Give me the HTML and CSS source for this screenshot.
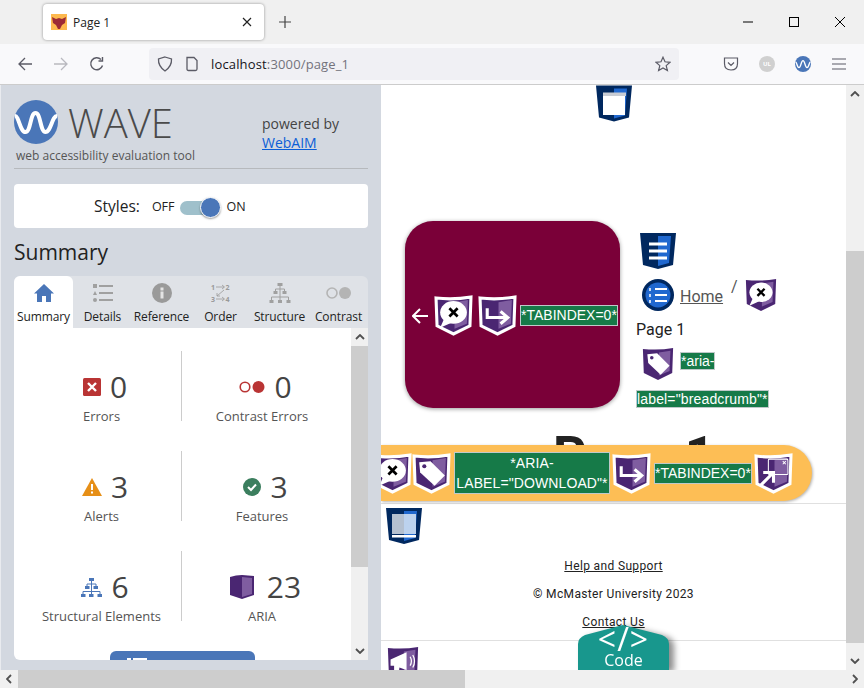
FILE: index.html
```html
<!DOCTYPE html>
<html lang="en">
<head>
  <meta charset="UTF-8">
  <title>Page 1</title>
  <link rel="stylesheet" href="styles.css">
</head>
<body>

<!-- shared icon shapes -->
<svg class="defs" aria-hidden="true">
  <symbol id="aria-base" viewBox="0 0 36 36" overflow="visible">
    <path d="M1 1 Q18 3 35 0 L34 28 L18 36 L2 28 Z" fill="#4a2672"/>
    <path d="M19 5 L32 3 L31 26 L19 31 Z" fill="#7f5da0"/>
  </symbol>
  <symbol id="aria-border" viewBox="0 0 36 36" overflow="visible">
    <path d="M1 1 Q18 3 35 0 L34 28 L18 36 L2 28 Z" fill="#4a2672" stroke="#fff" stroke-width="3"/>
    <path d="M19 5 L32 3 L31 26 L19 31 Z" fill="#7f5da0"/>
  </symbol>
  <symbol id="g-x" viewBox="0 0 36 36" overflow="visible">
    <ellipse cx="18" cy="15" rx="13" ry="11" fill="#fff"/>
    <path d="M9 21 L5 30 L16 25 Z" fill="#fff"/>
    <path d="M14 11 L22 19 M22 11 L14 19" stroke="#000" stroke-width="2.600"/>
  </symbol>
  <symbol id="g-tag" viewBox="0 0 36 36" overflow="visible">
    <path d="M6 7 L17 6 L31 20 L21 30 L7 17 Z" fill="#fff"/>
    <circle cx="11" cy="11" r="2" fill="#4a2672"/>
  </symbol>
  <symbol id="g-arrow" viewBox="0 0 36 36" overflow="visible">
    <path d="M8 11 V20 H26 M21 14 L28 20 L21 26" fill="none" stroke="#fff" stroke-width="3"/>
  </symbol>
  <symbol id="g-zoom" viewBox="0 0 36 36" overflow="visible">
    <rect x="13" y="4" width="19" height="15" rx="1" fill="none" stroke="#fff" stroke-width="1"/>
    <path d="M27 6 L30 9 M30 6 L27 9" stroke="#fff"/>
    <path d="M5 30 L17 18 M8 17 H18 V27" fill="none" stroke="#fff" stroke-width="3"/>
  </symbol>
  <symbol id="g-speaker" viewBox="0 0 36 36" overflow="visible">
    <path d="M4 14 L22 6 V26 L14 23 L13 31 H8 L8 21 H4 Z" fill="#fff"/>
    <path d="M26 11 Q29 16 26 21 M29 9 Q33 16 29 23" fill="none" stroke="#fff" stroke-width="1.400"/>
  </symbol>
  <symbol id="html-shield" viewBox="0 0 36 36" overflow="visible">
    <path d="M0 0 H36 L33 32 L18 36 L3 32 Z" fill="#00285f"/>
    <path d="M18 3 H31 L29 30 L18 33 Z" fill="#2068cf"/>
  </symbol>
</svg>

<div class="window">

  <header class="tabbar">
    <div class="tab">
      <svg class="favicon" viewBox="0 0 16 16">
        <rect width="16" height="16" fill="#fdb94e"/>
        <path d="M1 3 L5 5 L8 4 L11 5 L15 3 L14 9 L11 11 L9 15 H7 L5 11 L2 9 Z" fill="#9c2a35"/>
      </svg>
      <span class="tab-title">Page 1</span>
      <svg class="tab-close" viewBox="0 0 10 10"><path d="M1 1 L9 9 M9 1 L1 9" stroke="#222" stroke-width="1.200"/></svg>
    </div>
    <svg class="new-tab" viewBox="0 0 12 12"><path d="M6 0 V12 M0 6 H12" stroke="#444" stroke-width="1.200"/></svg>
    <div class="win-controls">
      <svg viewBox="0 0 12 12"><path d="M1 6 H11" stroke="#000"/></svg>
      <svg viewBox="0 0 12 12"><rect x="1.500" y="1.500" width="9" height="9" fill="none" stroke="#000"/></svg>
      <svg viewBox="0 0 12 12"><path d="M1 1 L11 11 M11 1 L1 11" stroke="#000"/></svg>
    </div>
  </header>

  <nav class="toolbar">
    <svg class="tb-icon" viewBox="0 0 16 16"><path d="M15 8 H2 M8 2 L2 8 L8 14" fill="none" stroke="#5b5b66" stroke-width="1.300"/></svg>
    <svg class="tb-icon" viewBox="0 0 16 16"><path d="M1 8 H14 M8 2 L14 8 L8 14" fill="none" stroke="#b9b9bf" stroke-width="1.300"/></svg>
    <svg class="tb-icon" viewBox="0 0 16 16"><path d="M13.500 9.500 A6 6 0 1 1 12 3.500 M13.500 1 V5 H9.500" fill="none" stroke="#5b5b66" stroke-width="1.400"/></svg>
    <div class="urlbar">
      <svg class="url-icon" viewBox="0 0 16 16"><path d="M8 1 L14.500 3 Q15 10 8 15 Q1 10 1.500 3 Z" fill="none" stroke="#5b5b66" stroke-width="1.300"/></svg>
      <svg class="url-icon" viewBox="0 0 16 16"><path d="M3 1.500 H10 L13 4.500 V13 Q13 14.500 11.500 14.500 H4.500 Q3 14.500 3 13 Z" fill="none" stroke="#5b5b66" stroke-width="1.300"/></svg>
      <span class="url-text"><span class="url-host">localhost</span>:3000/page_1</span>
      <svg class="url-star" viewBox="0 0 16 16"><path d="M8 1.200 L10 5.800 L15 6.300 L11.200 9.600 L12.400 14.600 L8 12 L3.600 14.600 L4.800 9.600 L1 6.300 L6 5.800 Z" fill="none" stroke="#5b5b66" stroke-width="1.200"/></svg>
    </div>
    <div class="tb-right">
      <svg class="tb-icon" viewBox="0 0 16 16"><path d="M1.500 2 H14.500 V7.500 Q14.500 14 8 14 Q1.500 14 1.500 7.500 Z M5 6.500 L8 9.500 L11 6.500" fill="none" stroke="#5b5b66" stroke-width="1.200"/></svg>
      <svg class="tb-icon" viewBox="0 0 16 16"><circle cx="8" cy="8" r="8" fill="#d0d0d0"/><text x="8" y="10" class="ul-text">UL</text></svg>
      <svg class="tb-icon" viewBox="0 0 16 16"><circle cx="8" cy="8" r="8" fill="#4a76b8"/><path d="M0.500 6 C2 6 2 11.600 4 11.600 C6 11.600 6 4.600 8 4.600 C10 4.600 10 11.600 12 11.600 C14 11.600 14 6 15.500 6" fill="none" stroke="#fff" stroke-width="1.400"/></svg>
      <svg class="tb-icon" viewBox="0 0 16 16"><path d="M1 3 H15 M1 8 H15 M1 13 H15" stroke="#5b5b66" stroke-width="1.200"/></svg>
    </div>
  </nav>

  <div class="viewport">

    <aside class="wave">
      <div class="wave-head">
        <div class="wave-brand">
          <div class="wave-logo">
            <svg class="wave-mark" viewBox="0 0 44 44">
              <circle cx="22" cy="22" r="22" fill="#4a76b8"/>
              <path d="M1 16 C5 16 6 32 11.500 32 C17 32 16 13 21.500 13 C27 13 26 32 31.500 32 C37 32 38 16 43 16" fill="none" stroke="#fff" stroke-width="4"/>
            </svg>
            <span class="wave-name">WAVE</span>
          </div>
          <div class="wave-sub">web accessibility evaluation tool</div>
        </div>
        <div class="wave-powered">powered by<br><a href="#">WebAIM</a></div>
      </div>

      <div class="styles-card">
        <span class="styles-label">Styles:</span>
        <span class="styles-opt">OFF</span>
        <span class="toggle"><span class="toggle-knob"></span></span>
        <span class="styles-opt">ON</span>
      </div>

      <h2 class="wave-title">Summary</h2>

      <div class="tabs">
        <div class="wtab active">
          <svg viewBox="0 0 20 20"><path d="M10 1 L20 10.500 H17 V19 H12 V13 H8 V19 H3 V10.500 H0 Z" fill="#4a76b8"/></svg>
          Summary
        </div>
        <div class="wtab">
          <svg viewBox="0 0 20 20"><path d="M6 3 H20 M6 10 H20 M6 17 H20" stroke="#a0a0a0" stroke-width="2"/><rect y="1" width="4" height="4" fill="#a0a0a0"/><path d="M2 8 L4 12 H0 Z" fill="#a0a0a0"/><circle cx="2" cy="17" r="2" fill="#a0a0a0"/></svg>
          Details
        </div>
        <div class="wtab">
          <svg viewBox="0 0 20 20"><circle cx="10" cy="10" r="10" fill="#9a9a9a"/><rect x="8.500" y="8.500" width="3" height="7" fill="#e4e4e4"/><rect x="8.500" y="4.500" width="3" height="3" fill="#e4e4e4"/></svg>
          Reference
        </div>
        <div class="wtab">
          <svg viewBox="0 0 20 20"><text x="0" y="7" class="order-text">1</text><text x="14.500" y="7" class="order-text">2</text><text x="0" y="19" class="order-text">3</text><text x="14.500" y="19" class="order-text">4</text><path d="M5 4 H13 M11 2 L13.500 4 L11 6 M5 16 H13 M11 14 L13.500 16 L11 18 M13 7 L6 13 M6 10 V13 H9" fill="none" stroke="#999" stroke-width=".8"/></svg>
          Order
        </div>
        <div class="wtab">
          <svg class="wide" viewBox="0 0 21 20"><g fill="#a0a0a0"><rect x="8" y="0" width="5" height="3"/><rect x="4" y="8" width="4" height="3"/><rect x="13" y="8" width="4" height="3"/><rect x="0" y="17" width="4" height="3"/><rect x="8.500" y="17" width="4" height="3"/><rect x="17" y="17" width="4" height="3"/></g><path d="M10.500 3 V17 M6 8 V6 H15 V8 M2 17 V14 H19 V17" fill="none" stroke="#a0a0a0"/></svg>
          Structure
        </div>
        <div class="wtab">
          <svg class="wide" viewBox="0 0 26 20"><circle cx="6" cy="10" r="5" fill="none" stroke="#b4b4b4" stroke-width="1.600"/><circle cx="19" cy="10" r="6" fill="#b4b4b4"/></svg>
          Contrast
        </div>
      </div>

      <div class="tab-panel">
        <div class="stats">
          <div class="stat">
            <div class="stat-num">
              <svg class="stat-icon" viewBox="0 0 18 18"><rect width="18" height="18" rx="1.500" fill="#b93434"/><path d="M5 5 L13 13 M13 5 L5 13" stroke="#fff" stroke-width="2.400"/></svg>
              0
            </div>
            <div class="stat-label">Errors</div>
          </div>
          <div class="stat">
            <div class="stat-num">
              <svg class="stat-icon contrast" viewBox="0 0 26 12"><circle cx="6" cy="6" r="4.800" fill="none" stroke="#b93434" stroke-width="1.600"/><circle cx="19.500" cy="6" r="6" fill="#b93434"/></svg>
              0
            </div>
            <div class="stat-label">Contrast Errors</div>
          </div>
          <div class="stat">
            <div class="stat-num">
              <svg class="stat-icon alert" viewBox="0 0 20 18"><path d="M10 0 L20 18 H0 Z" fill="#e68f17"/><rect x="9" y="6" width="2" height="6" fill="#fff"/><rect x="9" y="13.500" width="2" height="2" fill="#fff"/></svg>
              3
            </div>
            <div class="stat-label">Alerts</div>
          </div>
          <div class="stat">
            <div class="stat-num">
              <svg class="stat-icon" viewBox="0 0 18 18"><circle cx="9" cy="9" r="9" fill="#3b7e5e"/><path d="M5 9 L8 12 L13 6.500" fill="none" stroke="#fff" stroke-width="2"/></svg>
              3
            </div>
            <div class="stat-label">Features</div>
          </div>
          <div class="stat">
            <div class="stat-num">
              <svg class="stat-icon tree" viewBox="0 0 21 19"><g fill="#4a76b8"><rect x="8" y="0" width="5" height="3"/><rect x="4" y="8" width="4.500" height="3"/><rect x="12.500" y="8" width="4.500" height="3"/><rect x="0" y="16" width="4.500" height="3"/><rect x="8" y="16" width="4.500" height="3"/><rect x="16.500" y="16" width="4.500" height="3"/></g><path d="M10.500 3 V16 M6 8 V6 H15 V8 M2 16 V13.500 H19 V16" fill="none" stroke="#4a76b8"/></svg>
              6
            </div>
            <div class="stat-label">Structural Elements</div>
          </div>
          <div class="stat">
            <div class="stat-num aria">
              <svg class="stat-icon box" viewBox="0 0 24 24"><path d="M0 2 Q6 0 12 0 L24 1 V20 L12 24 L0 20 Z" fill="#4a2672"/><path d="M12 2 L22 3 V19 L12 22 Z" fill="#7f5da0"/></svg>
              23
            </div>
            <div class="stat-label">ARIA</div>
          </div>
        </div>
        <div class="panel-btn">
          <svg viewBox="0 0 20 10"><path d="M0 1 H4 M6 1 H20" stroke="#fff" stroke-width="2"/></svg>
        </div>
        <div class="vscroll inner">
          <svg class="sb-arrow" viewBox="0 0 10 6"><path d="M1 5 L5 1 L9 5" fill="none" stroke="#505050" stroke-width="1.800"/></svg>
          <div class="sb-thumb panel-thumb"></div>
          <div class="sb-fill"></div>
          <svg class="sb-arrow" viewBox="0 0 10 6"><path d="M1 1 L5 5 L9 1" fill="none" stroke="#505050" stroke-width="1.800"/></svg>
        </div>
      </div>
    </aside>

    <main class="page">
      <div class="page-scroll">
        <svg class="top-shield" viewBox="0 0 36 36">
          <use href="#html-shield"/>
          <rect x="7" y="7" width="23" height="3.500" fill="#c8ccd4"/>
          <rect x="7" y="10.500" width="22" height="19" fill="#fff"/>
        </svg>

        <div class="hero">
          <div class="hero-card">
            <svg class="hero-arrow" viewBox="0 0 16 16"><path d="M16 8 H1 M8 1 L1 8 L8 15" fill="none" stroke="#fff" stroke-width="2"/></svg>
            <svg class="aria-icon bordered" viewBox="0 0 36 36"><use href="#aria-border"/><use href="#g-x"/></svg>
            <svg class="aria-icon bordered" viewBox="0 0 36 36"><use href="#aria-border"/><use href="#g-arrow"/></svg>
            <span class="wave-label">*TABINDEX=0*</span>
          </div>
          <div class="crumbs">
            <svg class="crumb-shield" viewBox="0 0 36 36">
              <use href="#html-shield"/>
              <path d="M9 11 H27 M9 18 H27 M9 25 H27" stroke="#fff" stroke-width="3"/>
            </svg>
            <div class="crumb-row">
              <svg class="round-icon" viewBox="0 0 32 32">
                <circle cx="16" cy="16" r="16" fill="#00285f"/>
                <circle cx="16" cy="16" r="12.500" fill="#2068cf"/>
                <path d="M13 10 H25 M13 16 H25 M13 22 H25" stroke="#fff" stroke-width="2"/>
                <path d="M8 9 V12 M8 15 V18 M8 21 V24" stroke="#fff" stroke-width="1.500"/>
              </svg>
              <a class="crumb-link" href="#">Home</a>
              <span class="crumb-sep">/</span>
              <svg class="crumb-aria" viewBox="0 0 36 36"><use href="#aria-base"/><use href="#g-x"/></svg>
            </div>
            <div class="crumb-current">Page 1</div>
            <div class="crumb-row tag-row">
              <svg class="crumb-aria" viewBox="0 0 36 36"><use href="#aria-base"/><use href="#g-tag"/></svg>
              <span class="wave-label">*aria-</span>
            </div>
            <span class="wave-label crumb-last">label="breadcrumb"*</span>
          </div>
        </div>

        <h1 class="page-heading">Page 1</h1>

        <div class="download-bar">
          <svg class="aria-icon bordered first" viewBox="0 0 36 36"><use href="#aria-border"/><use href="#g-x"/></svg>
          <svg class="aria-icon bordered" viewBox="0 0 36 36"><use href="#aria-border"/><use href="#g-tag"/></svg>
          <span class="wave-label download-label">*ARIA-LABEL="DOWNLOAD"*</span>
          <svg class="aria-icon bordered" viewBox="0 0 36 36"><use href="#aria-border"/><use href="#g-arrow"/></svg>
          <span class="wave-label">*TABINDEX=0*</span>
          <svg class="aria-icon bordered" viewBox="0 0 36 36"><use href="#aria-border"/><use href="#g-zoom"/></svg>
        </div>

        <footer class="page-footer">
          <svg class="footer-shield" viewBox="0 0 36 36">
            <use href="#html-shield"/>
            <rect x="6" y="6" width="12" height="20" fill="#b4c0d0"/>
            <rect x="18" y="6" width="12" height="20" fill="#bcd2ee"/>
            <rect x="6" y="27" width="24" height="2.500" fill="#fff"/>
          </svg>
          <a class="footer-line" href="#">Help and Support</a>
          <p class="footer-line">© McMaster University 2023</p>
          <a class="footer-line" href="#">Contact Us</a>
        </footer>

        <div class="bottom-strip">
          <svg class="speaker" viewBox="0 0 36 36"><use href="#aria-base"/><use href="#g-speaker"/></svg>
        </div>

        <div class="code-tab">
          <div class="code-shape">
            <span class="code-mark">&lt;/&gt;</span>
            <span class="code-word">Code</span>
          </div>
        </div>
      </div>

      <div class="vscroll outer">
        <svg class="sb-arrow" viewBox="0 0 10 6"><path d="M1 5 L5 1 L9 5" fill="none" stroke="#505050" stroke-width="1.800"/></svg>
        <div class="sb-fill page-track"></div>
        <div class="sb-thumb page-thumb"></div>
        <div class="sb-fill"></div>
        <svg class="sb-arrow" viewBox="0 0 10 6"><path d="M1 1 L5 5 L9 1" fill="none" stroke="#505050" stroke-width="1.800"/></svg>
      </div>
    </main>
  </div>

  <div class="hscroll">
    <svg class="sb-arrow" viewBox="0 0 6 10"><path d="M5 1 L1 5 L5 9" fill="none" stroke="#505050" stroke-width="1.800"/></svg>
    <div class="h-thumb"></div>
    <div class="sb-fill"></div>
    <svg class="sb-arrow" viewBox="0 0 6 10"><path d="M1 1 L5 5 L1 9" fill="none" stroke="#505050" stroke-width="1.800"/></svg>
  </div>

</div>

</body>
</html>
```

FILE: styles.css
```css
* {
  box-sizing: border-box;
}
body {
  margin: 0;
  overflow: hidden;
  font-family: "Open Sans", sans-serif;
  color: #222;
  background: #fff;
}
a {
  color: inherit;
}
.defs {
  display: none;
}
.window {
  width: 864px;
  height: 688px;
  display: flex;
  flex-direction: column;
  overflow: hidden;
}

/* browser chrome */
.tabbar {
  height: 44px;
  background: #f0f0f0;
  display: flex;
  align-items: flex-start;
  padding: 4px 0 0 43px;
}
.tab {
  width: 221px;
  height: 36px;
  background: #fff;
  border-radius: 4px;
  box-shadow: 0 0 3px rgba(0,0,0,0.4);
  display: flex;
  align-items: center;
  padding: 0 12px 0 8px;
}
.favicon {
  width: 16px;
  height: 16px;
}
.tab-title {
  margin-left: 6px;
  font-size: 12px;
  flex: 1;
}
.tab-close {
  width: 10px;
  height: 10px;
}
.new-tab {
  width: 12px;
  height: 12px;
  margin: 12px 0 0 15px;
}
.win-controls {
  margin-left: auto;
  display: flex;
  gap: 34px;
  padding: 12px 18px 0 0;
}
.win-controls svg {
  width: 12px;
  height: 12px;
}
.toolbar {
  height: 41px;
  background: #f9f9fb;
  border-bottom: 1px solid #ccc;
  display: flex;
  align-items: center;
  padding: 0 17px;
  gap: 20px;
}
.tb-icon {
  width: 16px;
  height: 16px;
}
.urlbar {
  width: 530px;
  height: 32px;
  margin-left: 24px;
  background: #f0f0f4;
  border-radius: 4px;
  display: flex;
  align-items: center;
  padding: 0 8px;
  gap: 11px;
}
.url-icon {
  width: 16px;
  height: 16px;
}
.url-text {
  flex: 1;
  font-size: 13px;
  letter-spacing: 0.15px;
  color: #73737c;
}
.url-host {
  color: #15141a;
}
.url-star {
  width: 16px;
  height: 16px;
}
.tb-right {
  margin-left: 24px;
  display: flex;
  gap: 20px;
}
.ul-text {
  font-size: 6px;
  font-weight: 700;
  fill: #fff;
  text-anchor: middle;
}

.viewport {
  flex: 1;
  min-height: 0;
  display: flex;
}

/* WAVE sidebar */
.wave {
  width: 381px;
  flex: none;
  background: #d3d8e0;
  border-left: 1px solid #e9ebef;
  padding: 15px 13px 0 13px;
  display: flex;
  flex-direction: column;
}
.wave-head {
  display: flex;
  height: 69px;
  border-bottom: 1px solid #b6b9bd;
}
.wave-brand {
  width: 248px;
}
.wave-logo {
  display: flex;
  align-items: center;
  gap: 10px;
  height: 44px;
}
.wave-mark {
  width: 44px;
  height: 44px;
}
.wave-name {
  font-size: 40px;
  font-weight: 300;
  color: #4a4a4a;
}
.wave-sub {
  font-size: 12px;
  color: #555;
  margin: 3px 0 0 2px;
}
.wave-powered {
  font-size: 14px;
  line-height: 19px;
  color: #444;
  padding-top: 14px;
}
.wave-powered a {
  color: #0b5ed7;
}
.styles-card {
  height: 44px;
  margin-top: 15px;
  background: #fff;
  border-radius: 4px;
  display: flex;
  align-items: center;
  padding-left: 80px;
}
.styles-label {
  font-size: 15.500px;
  margin-right: 12px;
}
.styles-opt {
  font-size: 12.500px;
}
.toggle {
  width: 38px;
  height: 14px;
  margin: 3px 9px 0 5px;
  background: #9fc0cb;
  border-radius: 7px;
  position: relative;
}
.toggle-knob {
  position: absolute;
  right: -3px;
  top: -4px;
  width: 21px;
  height: 21px;
  background: #4a76b8;
  border: 1px solid #fff;
  border-radius: 50%;
  box-shadow: 0 1px 2px rgba(0,0,0,0.4);
}
.wave-title {
  margin: 9px 0;
  font-size: 21px;
  line-height: 30px;
  font-weight: 400;
}
.tabs {
  height: 52px;
  background: #dfe2e7;
  border-radius: 6px 6px 0 0;
  display: grid;
  grid-template-columns: 59px 59px 59px 59px 59px 59px;
}
.wtab {
  padding-top: 7px;
  font-size: 12px;
  line-height: 16px;
  letter-spacing: -0.1px;
  text-align: center;
  white-space: nowrap;
}
.wtab svg {
  display: block;
  width: 20px;
  height: 20px;
  margin: 0 auto 6px;
}
.wtab svg.wide {
  width: 26px;
}
.wtab.active {
  background: #fff;
  border-radius: 6px 6px 0 0;
}
.order-text {
  font-size: 7px;
  font-weight: 700;
  fill: #999;
}
.tab-panel {
  flex: none;
  height: 332px;
  background: #fff;
  border-radius: 0 0 0 6px;
  position: relative;
  overflow: hidden;
  padding: 23px 25px 0 8px;
}
.stats {
  display: grid;
  grid-template-columns: 160px 160px;
  grid-auto-rows: 70px;
  row-gap: 30px;
}
.stat {
  height: 70px;
  text-align: center;
}
.stat:nth-child(odd) {
  border-right: 1px solid #ccc;
}
.stat-num {
  height: 44px;
  padding: 28px 0 0 7px;
  display: flex;
  justify-content: center;
  align-items: center;
  gap: 9px;
  font-size: 30px;
  line-height: 44px;
  color: #444;
}
.stat-num.aria {
  gap: 13px;
}
.stat-icon {
  width: 18px;
  height: 18px;
}
.stat-icon.contrast {
  width: 26px;
  height: 12px;
}
.stat-icon.alert {
  width: 20px;
}
.stat-icon.tree {
  width: 21px;
  height: 19px;
}
.stat-icon.box {
  width: 24px;
  height: 24px;
}
.stat-label {
  font-size: 13px;
  line-height: 18px;
  margin-top: 12px;
  color: #555;
}
.panel-btn {
  width: 145px;
  height: 20px;
  margin: 30px 0 0 88px;
  background: #4a76b8;
  border-radius: 6px 6px 0 0;
  padding: 7px 0 0 17px;
}
.panel-btn svg {
  display: block;
  width: 20px;
  height: 10px;
}

/* scrollbars */
.vscroll {
  width: 18px;
  flex: none;
  display: flex;
  flex-direction: column;
  align-items: center;
  background: #f0f0f0;
}
.vscroll .sb-arrow {
  width: 10px;
  height: 6px;
  margin: 6px 0;
  flex: none;
}
.vscroll.inner {
  position: absolute;
  right: 0;
  top: 0;
  bottom: 0;
  width: 17px;
}
.sb-thumb {
  width: 100%;
  background: #cdcdcd;
  flex: none;
}
.panel-thumb {
  height: 221px;
}
.sb-fill {
  flex: 1;
}
.sb-fill.page-track {
  flex: none;
  height: 148px;
}
.page-thumb {
  height: 392px;
}
.hscroll {
  height: 18px;
  flex: none;
  background: #f0f0f0;
  display: flex;
  align-items: center;
}
.hscroll .sb-arrow {
  width: 6px;
  height: 10px;
  margin: 0 6px;
  flex: none;
}
.h-thumb {
  width: 447px;
  height: 18px;
  background: #cdcdcd;
}

/* page under test */
.page {
  flex: 1;
  min-width: 0;
  display: flex;
  background: #fff;
  font-family: Roboto, sans-serif;
}
.page-scroll {
  flex: 1;
  min-width: 0;
  position: relative;
  overflow: hidden;
  display: flex;
  flex-direction: column;
}
.top-shield {
  width: 36px;
  height: 37px;
  flex: none;
  margin-left: 215px;
  display: block;
}
.hero {
  display: flex;
  margin-top: 99px;
  padding-left: 24px;
  flex: none;
}
.hero-card {
  width: 215px;
  height: 187px;
  background: #7a0038;
  border-radius: 28px;
  box-shadow: 0 1px 4px rgba(0,0,0,0.4);
  display: flex;
  align-items: center;
  padding: 2px 0 0 7px;
  flex: none;
}
.hero-arrow {
  width: 16px;
  height: 16px;
  margin-right: 7px;
  flex: none;
}
.aria-icon {
  width: 37px;
  height: 37px;
  flex: none;
  overflow: visible;
}
.hero-card .aria-icon {
  margin-right: 7px;
}
.hero-card .wave-label {
  margin-left: -3px;
}
.wave-label {
  display: inline-block;
  background: #167a48;
  color: #fff;
  border: 1px solid #bfc9c9;
  font-family: "Liberation Sans", Arial, sans-serif;
  font-size: 14px;
  line-height: 19px;
  white-space: nowrap;
  text-align: center;
  flex: none;
}
.crumbs {
  margin: 12px 0 0 16px;
  display: flex;
  flex-direction: column;
  align-items: flex-start;
  width: 160px;
}
.crumb-shield {
  width: 36px;
  height: 36px;
  margin-left: 4px;
}
.crumb-row {
  display: flex;
  align-items: center;
  margin: 10px 0 0 6px;
}
.round-icon {
  width: 32px;
  height: 32px;
}
.crumb-link {
  margin-left: 6px;
  font-size: 16px;
  color: #555;
  padding-top: 2px;
}
.crumb-sep {
  margin: -18px 7px 0 8px;
  font-size: 16px;
  color: #555;
}
.crumb-aria {
  width: 32px;
  height: 32px;
  overflow: visible;
}
.crumb-current {
  margin-top: 9px;
  font-size: 16px;
  line-height: 20px;
}
.tag-row {
  margin-top: 8px;
}
.tag-row .wave-label {
  margin: -6px 0 0 6px;
  line-height: 16px;
}
.crumb-last {
  margin-top: 10px;
  line-height: 16px;
  letter-spacing: 0.15px;
}
.page-heading {
  margin: 18px 0 0 172px;
  height: 19px;
  font-size: 52px;
  line-height: 60px;
  font-weight: 700;
  white-space: nowrap;
  flex: none;
}
.download-bar {
  width: 431px;
  height: 56px;
  flex: none;
  position: relative;
  z-index: 1;
  background: #fdbe55;
  border-radius: 0 28px 28px 0;
  box-shadow: 1px 1px 3px rgba(0,0,0,0.3);
  display: flex;
  align-items: center;
  overflow: hidden;
}
.download-bar .aria-icon {
  margin-right: 4px;
}
.download-bar .aria-icon.first {
  margin: 0 2px 0 -7px;
}
.download-bar .wave-label {
  margin-right: 3px;
}
.download-bar .download-label {
  width: 156px;
  height: 42px;
  line-height: 20px;
  letter-spacing: 0.1px;
  white-space: normal;
}
.page-footer {
  flex: none;
  margin-top: 2px;
  height: 137px;
  border-top: 1px solid #e0e0e0;
  text-align: center;
  font-size: 12px;
  letter-spacing: 0.35px;
  padding-top: 4px;
  display: flex;
  flex-direction: column;
  align-items: center;
}
.footer-shield {
  width: 36px;
  height: 36px;
  flex: none;
  align-self: flex-start;
  margin-left: 5px;
}
.footer-line {
  margin: 0 0 14px;
  line-height: 14px;
  color: #222;
}
.page-footer a:first-of-type {
  margin-top: 15px;
}
.bottom-strip {
  flex: 1;
  border-top: 1px solid #e0e0e0;
  background: #fff;
  padding: 6px 0 0 6px;
  overflow: hidden;
}
.speaker {
  display: block;
  width: 32px;
  height: 32px;
  overflow: visible;
}
.code-tab {
  position: absolute;
  left: 197px;
  bottom: 0;
  width: 91px;
  height: 45px;
  z-index: 2;
  filter: drop-shadow(5px 2px 3px rgba(0,0,0,0.45));
}
.code-shape {
  height: 45px;
  background: #18978d;
  clip-path: path("M0 19 Q0 13 7 10 L45 0 L84 10 Q91 13 91 19 V45 H0 Z");
  display: flex;
  flex-direction: column;
  align-items: center;
  color: #fff;
  font-family: "Open Sans", sans-serif;
}
.code-mark {
  margin-top: 1px;
  font-size: 32px;
  line-height: 26px;
  letter-spacing: 1px;
}
.code-word {
  font-size: 16px;
  line-height: 16px;
}
```
